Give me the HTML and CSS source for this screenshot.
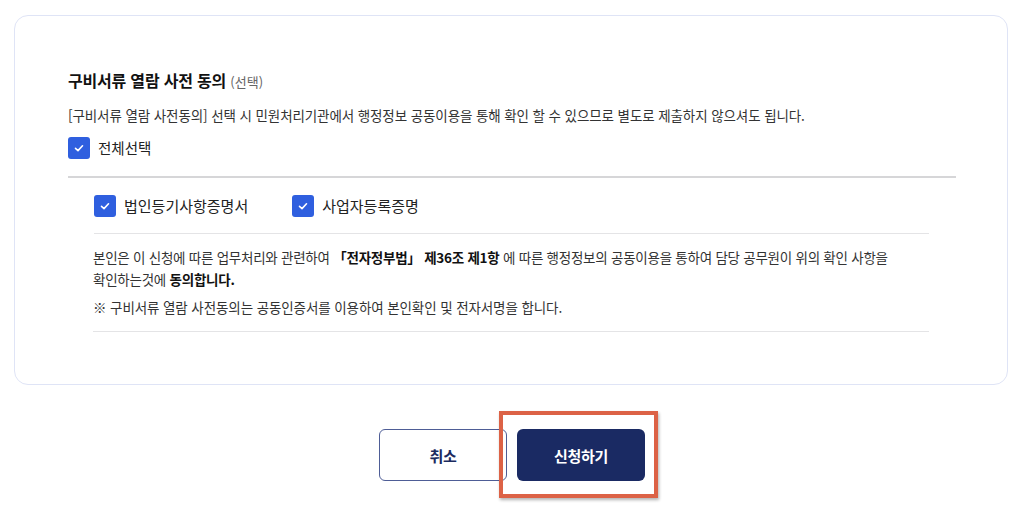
FILE: index.html
```html
<!DOCTYPE html>
<html lang="ko">
<head>
    <meta charset="UTF-8">
    <meta name="viewport" content="width=device-width, initial-scale=1.0">
    <title>구비서류 열람 사전 동의</title>
    <link rel="stylesheet" href="styles.css">
</head>
<body>
    <!-- 구비서류 열람 사전동의 -->
    <div class="consent_card">
        <h3 class="consent_title">구비서류 열람 사전 동의 <span class="consent_opt">(선택)</span></h3>
        <p class="consent_desc">[구비서류 열람 사전동의] 선택 시 민원처리기관에서 행정정보 공동이용을 통해 확인 할 수 있으므로 별도로 제출하지 않으셔도 됩니다.</p>
        <label class="check_item check_all">
            <span class="check_box">
                <svg viewBox="0 0 22 22" width="22" height="22"><polyline points="7.5,11.3 10,13.6 14.5,8.8" fill="none" stroke="#fff" stroke-width="1.6" stroke-linecap="round" stroke-linejoin="round"/></svg>
            </span>
            <span class="check_label">전체선택</span>
        </label>
        <div class="consent_divider"></div>
        <div class="consent_docs">
            <label class="check_item">
                <span class="check_box">
                    <svg viewBox="0 0 22 22" width="22" height="22"><polyline points="7.5,11.3 10,13.6 14.5,8.8" fill="none" stroke="#fff" stroke-width="1.6" stroke-linecap="round" stroke-linejoin="round"/></svg>
                </span>
                <span class="check_label">법인등기사항증명서</span>
            </label>
            <label class="check_item">
                <span class="check_box">
                    <svg viewBox="0 0 22 22" width="22" height="22"><polyline points="7.5,11.3 10,13.6 14.5,8.8" fill="none" stroke="#fff" stroke-width="1.6" stroke-linecap="round" stroke-linejoin="round"/></svg>
                </span>
                <span class="check_label">사업자등록증명</span>
            </label>
        </div>
        <div class="consent_notice">
            <p class="notice_text">본인은 이 신청에 따른 업무처리와 관련하여 <b>「전자정부법」 제36조 제1항</b> 에 따른 행정정보의 공동이용을 통하여 담당 공무원이 위의 확인 사항을<br>확인하는것에 <b>동의합니다.</b></p>
            <p class="notice_sub">※ 구비서류 열람 사전동의는 공동인증서를 이용하여 본인확인 및 전자서명을 합니다.</p>
        </div>
    </div>

    <div class="btn_row">
        <button class="btn btn_cancel">취소</button>
        <button class="btn btn_submit">신청하기<span class="btn_mark"></span></button>
    </div>
</body>
</html>
```

FILE: styles.css
```css
html,body{
    padding:0;
    margin:0;
    width:100%;
    height:100%;
    background:#fff;
}
body{
    font-family:"Noto Sans CJK KR","Noto Sans",sans-serif;
    color:#222;
}
.consent_card{
    box-sizing:border-box;
    margin:15px 16px 0 14px;
    height:370px;
    padding:53px 51px 0 53px;
    border:1px solid #dfe4f6;
    border-radius:14px;
}
.consent_title{
    margin:0;
    font-size:16px;
    line-height:22px;
    font-weight:700;
    letter-spacing:-0.2px;
    color:#111;
}
.consent_opt{
    font-size:13px;
    font-weight:400;
    letter-spacing:0;
    color:#666;
}
.consent_desc{
    margin:12px 0 0;
    font-size:13.5px;
    line-height:20px;
    letter-spacing:-0.1px;
    color:#333;
}
.check_item{
    display:flex;
    align-items:center;
}
.check_all{
    margin-top:12px;
}
.check_box{
    display:inline-block;
    width:22px;
    height:22px;
    border-radius:3px;
    background-color:#2f5fdf;
}
.check_box svg{
    display:block;
}
.check_label{
    margin-left:8px;
    font-size:15px;
    line-height:22px;
    color:#222;
}
.check_all .check_label{
    font-size:14.5px;
}
.consent_divider{
    margin-top:17px;
    height:2px;
    background-color:#d6d6d8;
}
.consent_docs{
    display:flex;
    gap:44px;
    margin:0 27px 0 26px;
    padding:17px 0 16px;
    border-bottom:1px solid #e4e4e6;
}
.consent_notice{
    margin:0 27px 0 25px;
    padding:12px 0 14px;
    border-bottom:1px solid #e4e4e6;
}
.notice_text{
    margin:0;
    font-size:13.5px;
    line-height:22px;
    letter-spacing:-0.25px;
    color:#333;
}
.notice_text b{
    color:#111;
}
.notice_sub{
    margin:7px 0 0;
    font-size:13.5px;
    line-height:20px;
    letter-spacing:-0.1px;
    color:#333;
}
.btn_row{
    display:flex;
    justify-content:center;
    gap:10px;
    margin-top:44px;
}
.btn{
    box-sizing:border-box;
    width:128px;
    height:52px;
    border-radius:6px;
    font-family:"Noto Sans CJK KR","Noto Sans",sans-serif;
    font-size:15px;
    font-weight:700;
    letter-spacing:-0.3px;
    cursor:pointer;
}
.btn_cancel{
    border:1px solid #4e5d96;
    background:#fff;
    color:#1b2a5e;
}
.btn_submit{
    position:relative;
    border:none;
    background-color:#1a2a63;
    color:#fff;
}
/* 강조 표시 박스 */
.btn_mark{
    position:absolute;
    left:-18px;
    top:-18px;
    box-sizing:border-box;
    width:159px;
    height:87px;
    border:4px solid #dc6246;
    box-shadow:1px 2px 3px rgba(0,0,0,0.3);
    pointer-events:none;
}
```
